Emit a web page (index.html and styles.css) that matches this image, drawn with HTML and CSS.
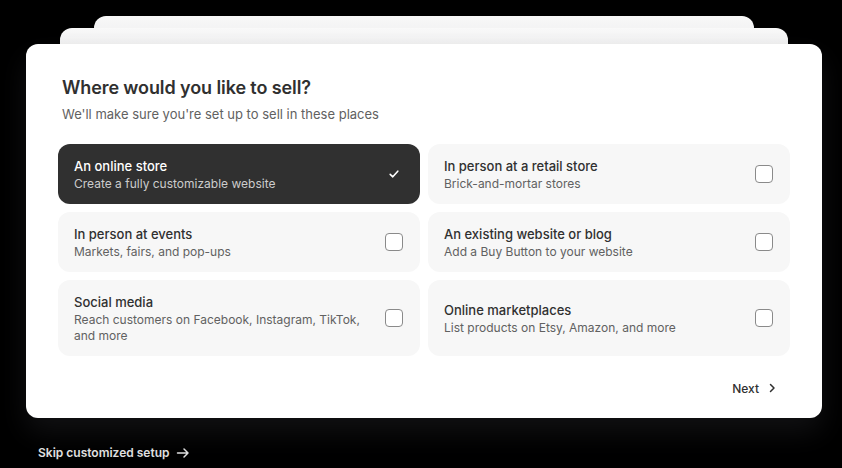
FILE: index.html
```html
<!DOCTYPE html>
<html lang="en">
<head>
<meta charset="utf-8">
<title>Where would you like to sell?</title>
<link rel="stylesheet" href="styles.css">
</head>
<body>
<div class="page">
  <div class="stack">
    <div class="ghost ghost-back"></div>
    <div class="ghost ghost-mid"></div>
    <section class="card">
      <header class="head">
        <h1 class="title">Where would you like to sell?</h1>
        <p class="subtitle">We'll make sure you're set up to sell in these places</p>
      </header>
      <div class="options">
        <label class="option selected">
          <span class="text"><span class="opt-title">An online store</span><span class="opt-sub">Create a fully customizable website</span></span>
          <span class="check"><svg width="12" height="12" viewBox="0 0 12 12"><path d="M2.2 6.4 L4.8 8.8 L9.8 3.2" fill="none" stroke="#fff" stroke-width="1.6" stroke-linecap="round" stroke-linejoin="round"/></svg></span>
        </label>
        <label class="option">
          <span class="text"><span class="opt-title">In person at a retail store</span><span class="opt-sub">Brick-and-mortar stores</span></span>
          <span class="box"></span>
        </label>
        <label class="option">
          <span class="text"><span class="opt-title">In person at events</span><span class="opt-sub">Markets, fairs, and pop-ups</span></span>
          <span class="box"></span>
        </label>
        <label class="option">
          <span class="text"><span class="opt-title">An existing website or blog</span><span class="opt-sub">Add a Buy Button to your website</span></span>
          <span class="box"></span>
        </label>
        <label class="option">
          <span class="text"><span class="opt-title">Social media</span><span class="opt-sub">Reach customers on Facebook, Instagram, TikTok, and more</span></span>
          <span class="box"></span>
        </label>
        <label class="option">
          <span class="text"><span class="opt-title">Online marketplaces</span><span class="opt-sub">List products on Etsy, Amazon, and more</span></span>
          <span class="box"></span>
        </label>
      </div>
      <footer class="foot">
        <button class="next">Next <svg width="12" height="12" viewBox="0 0 12 12"><path d="M4.5 2.5 L8 6 L4.5 9.5" fill="none" stroke="#303030" stroke-width="1.5" stroke-linecap="round" stroke-linejoin="round"/></svg></button>
      </footer>
    </section>
  </div>
  <a class="skip" href="#">Skip customized setup <svg width="14" height="14" viewBox="0 0 14 14"><path d="M1.5 7 H12 M8 3 L12 7 L8 11" fill="none" stroke="#e3e3e3" stroke-width="1.5" stroke-linecap="round" stroke-linejoin="round"/></svg></a>
</div>
</body>
</html>
```

FILE: styles.css
```css
* { box-sizing: border-box; }
html, body { margin: 0; padding: 0; }
body {
  background: #000;
  font-family: Inter, "Noto Sans", "Liberation Sans", sans-serif;
  width: 842px;
  height: 468px;
  overflow: hidden;
}
.page {
  padding: 44px 20px 0 26px;
}
.stack {
  position: relative;
  width: 796px;
}
.ghost {
  position: absolute;
  border-radius: 12px 12px 0 0;
  background: linear-gradient(#f8f8f8, #e9e9ea);
  height: 40px;
}
.ghost-back { left: 68px; right: 68px; top: -28px; }
.ghost-mid { left: 34px; right: 34px; top: -16px; background: linear-gradient(#f9f9f9, #ececed); }
.card {
  position: relative;
  background: #fff;
  border-radius: 12px;
  padding: 32px 32px 16px;
  height: 374px;
  box-shadow: 0 14px 28px rgba(60, 60, 70, 0.28);
}
.head { padding: 0 4px; }
.title {
  margin: 0;
  font-size: 18px;
  line-height: 24px;
  font-weight: 600;
  color: #303030;
  letter-spacing: -0.1px;
}
.subtitle {
  margin: 4px 0 0;
  font-size: 13px;
  line-height: 20px;
  color: #616161;
}
.options {
  margin-top: 20px;
  display: grid;
  grid-template-columns: 1fr 1fr;
  gap: 8px;
}
.option {
  display: flex;
  align-items: center;
  gap: 16px;
  background: #f7f7f7;
  border-radius: 12px;
  padding: 12px 17px 12px 16px;
  cursor: pointer;
}
.option.selected { background: #303030; }
.text { flex: 1; display: flex; flex-direction: column; }
.opt-title {
  font-size: 13px;
  line-height: 20px;
  font-weight: 550;
  color: #303030;
}
.opt-sub {
  font-size: 12px;
  line-height: 16px;
  color: #616161;
}
.selected .opt-title { color: #fff; }
.selected .opt-sub { color: #cccccc; }
.box {
  width: 18px;
  height: 18px;
  border: 1.5px solid #8a8a8a;
  border-radius: 4px;
  background: #fff;
  flex: none;
}
.check {
  width: 18px;
  height: 18px;
  display: flex;
  align-items: center;
  justify-content: center;
  flex: none;
}
.foot {
  display: flex;
  justify-content: flex-end;
  margin-top: 16px;
}
.next {
  display: flex;
  align-items: center;
  gap: 7px;
  border: 0;
  background: transparent;
  font-family: inherit;
  font-size: 12px;
  font-weight: 550;
  color: #303030;
  padding: 6px 12px;
  height: 32px;
  cursor: pointer;
}
.skip {
  display: inline-flex;
  align-items: center;
  gap: 6px;
  margin: 27px 0 0 12px;
  color: #e3e3e3;
  font-size: 12px;
  font-weight: 600;
  text-decoration: none;
}
```
